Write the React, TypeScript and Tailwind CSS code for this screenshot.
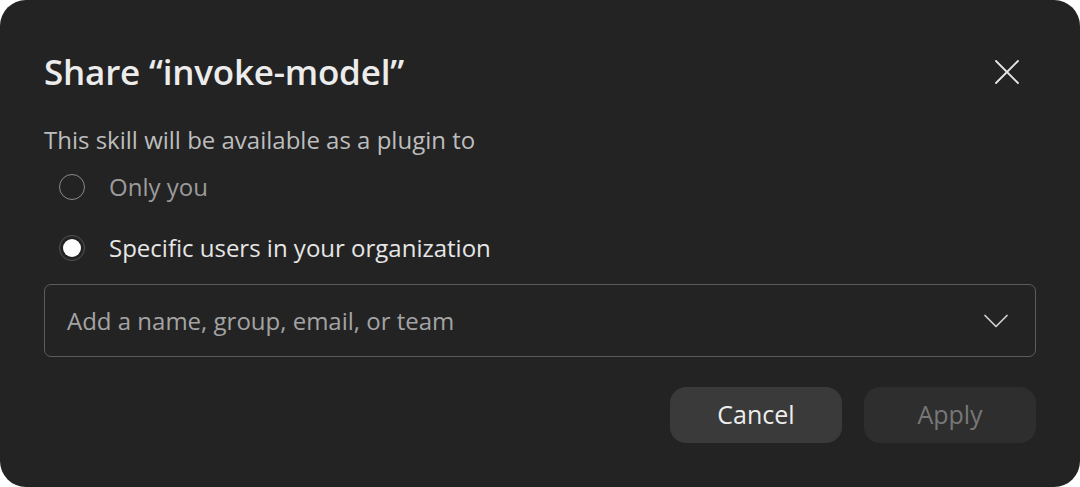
import { X, ChevronDown } from "lucide-react";

function Radio({ checked, label }: { checked?: boolean; label: string }) {
  return (
    <div className="flex items-center h-[40px] pl-[15px]">
      {checked ? (
        <span className="w-[26px] h-[26px] rounded-full border border-[#555] flex items-center justify-center">
          <span className="w-[18px] h-[18px] rounded-full bg-white" />
        </span>
      ) : (
        <span className="w-[26px] h-[26px] rounded-full border-[1.5px] border-[#8a8a8a]" />
      )}
      <span className={`ml-[24px] text-[24px] leading-[30px] ${checked ? "text-[#e6e6e6]" : "text-[#9b9b9b]"}`}>{label}</span>
    </div>
  );
}

export default function App() {
  return (
    <div className="w-[1080px] h-[487px] bg-white" style={{ fontFamily: '"Open Sans", "Noto Sans", sans-serif' }}>
      <div className="w-full h-full bg-[#232323] rounded-[26px] px-[44px] pt-[50px] flex flex-col">
        {/* Header */}
        <div className="flex items-center justify-between h-[44px]">
          <h1 className="text-[35px] leading-[44px] font-semibold text-[#ececec] tracking-[-0.2px]">Share “invoke-model”</h1>
          <button className="text-[#e6e6e6] mr-[7px]">
            <X size={44} strokeWidth={1} />
          </button>
        </div>

        <p className="mt-[31px] text-[24px] text-[#bdbdbd] leading-[30px]">This skill will be available as a plugin to</p>

        <div className="mt-[12px] flex flex-col gap-[21px]">
          <Radio label="Only you" />
          <Radio checked label="Specific users in your organization" />
        </div>

        {/* Picker */}
        <div className="mt-[16px] h-[73px] border border-[#5c5c5c] rounded-[7px] flex items-center justify-between pl-[22px] pr-[17px]">
          <span className="text-[24px] leading-[30px] text-[#a3a3a3]">Add a name, group, email, or team</span>
          <ChevronDown size={44} strokeWidth={0.95} className="text-[#d0d0d0]" />
        </div>

        {/* Footer */}
        <div className="mt-[30px] flex justify-end gap-[22px]">
          <button className="w-[172px] h-[56px] rounded-[16px] bg-[#3a3a3a] text-[25px] text-[#ededed]">Cancel</button>
          <button className="w-[172px] h-[56px] rounded-[16px] bg-[#2e2e2e] text-[25px] text-[#777]">Apply</button>
        </div>
      </div>
    </div>
  );
}
